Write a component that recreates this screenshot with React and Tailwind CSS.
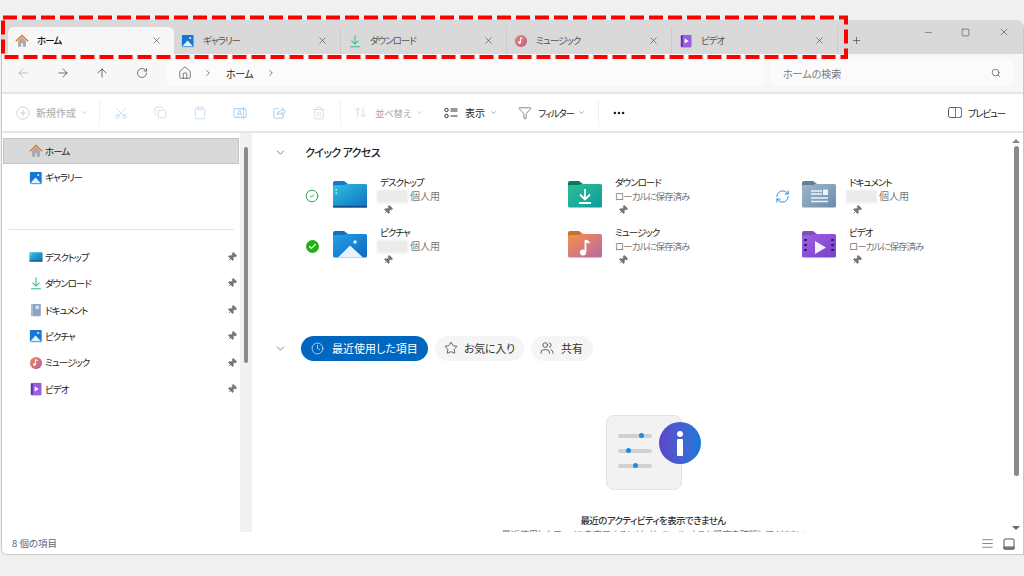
import React from "react";
import {
  ArrowLeft, ArrowRight, ArrowUp, RotateCw, Home, ChevronRight, ChevronDown, X, Plus, Minus, Square, Search,
  Scissors, Copy, Clipboard, Trash2, ArrowUpDown, Funnel, MoreHorizontal, Pin,
  Clock, Star, Users, RefreshCw, CircleCheck, Check, AlignJustify,
} from "lucide-react";

const HomeColor = ({ s = 14 }) => (
  <svg width={s} height={s} viewBox="0 0 16 16">
    <path d="M3.5 8v6.5h3.5v-4h2v4h3.5V8L8 3.5z" fill="#a9a9ad" />
    <path d="M1 8.2 8 1.6l7 6.6" fill="none" stroke="#e0782c" strokeWidth="1.7" />
  </svg>
);
const Gallery = ({ s = 14 }) => (
  <svg width={s} height={s} viewBox="0 0 16 16">
    <rect x="2" y="1" width="13" height="14" rx="1" fill="#7fb8ea" />
    <rect x="1" y="1" width="13" height="13.5" rx="1" fill="#1678d2" />
    <path d="M1.5 14 7.5 7.5 13.5 14z" fill="#e6f1fc" />
    <circle cx="10.5" cy="4.5" r="1.2" fill="#e6f1fc" />
  </svg>
);
const Download = ({ s = 14 }) => (
  <svg width={s} height={s} viewBox="0 0 16 16" fill="none" stroke="#36b898" strokeWidth="1.2">
    <path d="M8 1.5v9.5M4 7.5 8 11.5l4-4M2.5 14.5h11" />
  </svg>
);
const MusicIcon = ({ s = 14 }) => (
  <svg width={s} height={s} viewBox="0 0 16 16">
    <defs><linearGradient id="mg" x1="0" y1="0" x2="1" y2="1"><stop offset="0" stopColor="#ee8a4c" /><stop offset="1" stopColor="#b65fa8" /></linearGradient></defs>
    <circle cx="8" cy="8" r="7" fill="url(#mg)" />
    <path d="M7.5 4v5.2" stroke="#fff" strokeWidth="1.1" />
    <circle cx="6.3" cy="9.8" r="1.6" fill="#fff" />
    <path d="M7.5 4c1 .2 2 .8 2.4 1.8" stroke="#fff" strokeWidth="1.1" fill="none" />
  </svg>
);
const VideoIcon = ({ s = 14 }) => (
  <svg width={s} height={s} viewBox="0 0 16 16">
    <rect x="2" y="1" width="12" height="14" rx="1" fill="#7a3ec8" />
    <rect x="4.5" y="1" width="9.5" height="14" fill="#9a5fe0" />
    <path d="M6.5 5.2v5.6L11 8z" fill="#fff" />
    <path d="M3.2 2.5v2M3.2 6v1.5M3.2 9v1.5M3.2 12v1.5" stroke="#2a1a55" strokeWidth="1.1" />
  </svg>
);
const Desktop = ({ s = 14 }) => (
  <svg width={s} height={s} viewBox="0 0 16 16">
    <defs><linearGradient id="dg" x1="0" y1="0" x2="1" y2="1"><stop offset="0" stopColor="#39c2dc" /><stop offset="1" stopColor="#0f70b8" /></linearGradient></defs>
    <rect x="0.5" y="2.5" width="15" height="10.5" rx="1" fill="url(#dg)" />
    <rect x="0.5" y="12" width="15" height="1.2" fill="#0f4f8f" />
    <rect x="2" y="4.5" width="1" height="1" fill="#d8f4fa" />
  </svg>
);
const Doc = ({ s = 14 }) => (
  <svg width={s} height={s} viewBox="0 0 16 16">
    <rect x="2.5" y="1" width="11" height="14" rx="1" fill="#8ba4c0" />
    <rect x="7.5" y="3" width="4" height="4" fill="#d5e0ec" />
    <rect x="2.5" y="1" width="2" height="14" fill="#aebfd2" />
  </svg>
);

const FolderBase = ({ from, to, tab, children, id }) => (
  <svg width="36" height="30" viewBox="0 0 36 30">
    <defs><linearGradient id={id} x1="0" y1="0" x2="1" y2="1"><stop offset="0" stopColor={from} /><stop offset="1" stopColor={to} /></linearGradient></defs>
    <path d="M1 4a2 2 0 0 1 2-2h9l4 3h0v4H1z" fill={tab} />
    <path d="M1 7.5a1.5 1.5 0 0 1 1.5-1.5h9.5l2.5-1H33.5a1.5 1.5 0 0 1 1.5 1.5V27a1.5 1.5 0 0 1-1.5 1.5h-31A1.5 1.5 0 0 1 1 27z" fill={`url(#${id})`} />
    {children}
  </svg>
);
const fDesktop = (
  <FolderBase id="f1" from="#30c0de" to="#1070c0" tab="#1378c8">
    <rect x="1" y="26.8" width="34" height="1.7" fill="#0c4a8a" />
    <rect x="3.5" y="10" width="1.5" height="1.5" fill="#cdeef8" />
    <rect x="3.5" y="13.5" width="1.5" height="1.5" fill="#cdeef8" />
  </FolderBase>
);
const fDownload = (
  <FolderBase id="f2" from="#2fbd92" to="#0d9ca0" tab="#0b7a62">
    <path d="M18 10v10M13 15.5l5 5 5-5M12 24h12" stroke="#fff" strokeWidth="1.8" fill="none" />
  </FolderBase>
);
const fDoc = (
  <FolderBase id="f3" from="#9fb6cc" to="#6a8cae" tab="#5f7f95">
    <path d="M10 12h11M10 15h11M10 19h17M10 22.5h17" stroke="#eef3f8" strokeWidth="1.4" />
    <rect x="22" y="10.5" width="5" height="5.5" fill="#eef3f8" />
  </FolderBase>
);
const fPic = (
  <FolderBase id="f4" from="#25a0e8" to="#0f68c0" tab="#1270c4">
    <path d="M6 28.5 18 16.5 31 28.5z" fill="#e8f2fd" />
    <circle cx="23" cy="13" r="1.7" fill="#e8f2fd" />
  </FolderBase>
);
const fMusic = (
  <FolderBase id="f5" from="#f89048" to="#b868a8" tab="#c8722c">
    <path d="M18.5 11v12" stroke="#fff" strokeWidth="1.8" />
    <circle cx="16" cy="23.5" r="3" fill="#fff" />
    <path d="M18.5 10.5c2 .3 4 1.500 4.500 4l-4.500-1z" fill="#fff" />
  </FolderBase>
);
const fVideo = (
  <FolderBase id="f6" from="#a060e8" to="#7a40c8" tab="#7d50b8">
    <path d="M14 12v13l11-6.500z" fill="#f4eefc" />
    <path d="M4.500 10v2M4.500 15v2M4.500 20v2M31.500 10v2M31.500 15v2M31.500 20v2" stroke="#2c1a55" strokeWidth="2.6" />
  </FolderBase>
);

const tabs = [
  { icon: <HomeColor />, label: "ホーム", active: true, w: "w-[166px]" },
  { icon: <Gallery />, label: "ギャラリー", w: "w-[166px]" },
  { icon: <Download />, label: "ダウンロード", w: "w-[166px]" },
  { icon: <MusicIcon />, label: "ミュージック", w: "w-[165px]" },
  { icon: <VideoIcon />, label: "ビデオ", w: "w-[166px]" },
];

const PinMark = ({ className = "" }) => (
  <Pin size={10} className={`rotate-45 text-[#777] fill-[#777] ${className}`} />
);

const sideItems = [
  [<Desktop />, "デスクトップ"],
  [<Download />, "ダウンロード"],
  [<Doc />, "ドキュメント"],
  [<Gallery />, "ピクチャ"],
  [<MusicIcon />, "ミュージック"],
  [<VideoIcon />, "ビデオ"],
];

const SideRow = ({ icon, label, pin, active }) => (
  <div className={`flex items-center h-[26.4px] pl-[25px] pr-[2px] text-[9.5px] tracking-[-1px] text-[#222] ${active ? "mr-[1px] bg-[#d9d9d9] border border-[#c4c4c4]" : "border border-transparent"}`}>
    <span className="w-[16px] flex justify-start shrink-0">{icon}</span>
    <span className="flex-1">{label}</span>
    {pin && <PinMark />}
  </div>
);

const Blur = () => <span className="inline-block ml-[-3px] w-[31px] h-[13px] bg-[#ebebeb] blur-[1px] mr-[2px]" />;

const QuickItem = ({ status, folder, name, sub, cloud, w, local }) => (
  <div className={`flex ${w} h-[50px]`}>
    <span className="w-[28px] h-[30px] flex items-center justify-start shrink-0 mt-[3px]">{status}</span>
    <span className="shrink-0 mt-[1px]">{folder}</span>
    <div className="ml-[12px] flex flex-col mt-[-3px]">
      <span className="text-[9.5px] tracking-[-1px] leading-[14px] text-[#222]">{name}</span>
      <span className={`${local ? "text-[9.5px] tracking-[-1px]" : "text-[10px]"} leading-[14px] h-[14px] text-[#777] flex items-center whitespace-nowrap`}>
        {cloud && <Blur />}
        {sub}
      </span>
      <span className="h-[13px] flex items-center pl-[3px]"><PinMark /></span>
    </div>
  </div>
);

const Okay = <CircleCheck size={14} strokeWidth={1.6} className="text-[#2e9e4b] ml-[1px]" />;
const Done = (
  <span className="ml-[1.5px] w-[13px] h-[13px] rounded-full bg-[#22b014] flex items-center justify-center">
    <Check size={9} strokeWidth={3} className="text-white" />
  </span>
);
const Sync = <RefreshCw size={15} strokeWidth={1.6} className="text-[#2b8fe8] ml-[2px]" />;

const CmdText = ({ children, dim, className = "" }) => (
  <span className={`leading-[14px] whitespace-nowrap ${dim ? "text-[#a8a8a8]" : "text-[#222]"} ${className}`}>{children}</span>
);
const Sep = ({ className }) => <span className={`w-px h-[26px] bg-[#f1f1f1] ${className}`} />;
const dimIcon = "text-[#b4d2ee]";

export default function App() {
  return (
    <div className="relative w-[1024px] h-[576px] bg-[#f0f0f0] pt-[20px] overflow-hidden font-['Noto_Sans_CJK_JP','Noto_Sans',sans-serif] [font-feature-settings:'palt']">
      <div className="ml-[1px] w-[1023px] h-[535px] flex flex-col rounded-tr-[8px] rounded-bl-[6px] overflow-hidden border-l border-b border-r border-[#c8c8c8] bg-white">
        {/* Tabs */}
        <div className="h-[34px] bg-[#d9d9d9] flex items-end pl-[6px] shrink-0">
          {tabs.map((t, i) => (
            <div
              key={t.label}
              className={`${t.w} h-[27px] flex items-center pl-[7px] pr-[12px] ${t.active ? "bg-[#f7f7f7] rounded-t-[6px]" : i === 1 ? "" : "border-l border-[#cbcbcb]"}`}
            >
              <span className="w-[14px] flex justify-center shrink-0">{t.icon}</span>
              <span className={`ml-[8px] flex-1 text-[9.5px] tracking-[-1px] ${t.active ? "text-[#111] font-medium" : "text-[#555]"}`}>{t.label}</span>
              <X size={11} strokeWidth={1.2} className="text-[#333]" />
            </div>
          ))}
          <div className="h-[27px] flex items-center border-l border-[#cbcbcb] pl-[13px]">
            <Plus size={11} strokeWidth={1.3} className="text-[#333]" />
          </div>
          <div className="flex ml-auto h-full items-center pb-[10px] text-[#444]">
            <Minus size={11} strokeWidth={1.1} className="mr-[27px]" />
            <Square size={9} strokeWidth={1.5} className="mr-[28px]" />
            <X size={12} strokeWidth={1.2} className="mr-[13px]" />
          </div>
        </div>
        {/* Nav */}
        <div className="h-[38px] bg-[#f7f7f7] flex items-center shrink-0 border-b-[2px] border-[#e6e6e6] box-content">
          <div className="flex items-center w-[165px] pl-[14px] text-[#333]">
            <ArrowLeft size={14} strokeWidth={1.2} className="text-[#aaa]" />
            <ArrowRight size={14} strokeWidth={1.2} className="ml-[26px]" />
            <ArrowUp size={14} strokeWidth={1.2} className="ml-[25px]" />
            <RotateCw size={12} strokeWidth={1.3} className="ml-[27px]" />
          </div>
          <div className="w-[597px] h-[26px] bg-[#fbfbfb] rounded-[4px] flex items-center pl-[11px] text-[#333]">
            <Home size={14} strokeWidth={1.1} />
            <ChevronRight size={10} strokeWidth={1.5} className="ml-[11px]" />
            <span className="ml-[13px] text-[10px] tracking-[-0.4px] text-[#222]">ホーム</span>
            <ChevronRight size={10} strokeWidth={1.5} className="ml-[13px]" />
          </div>
          <div className="ml-[7px] w-[242px] h-[26px] bg-[#fbfbfb] rounded-[4px] flex items-center px-[12px] justify-between">
            <span className="text-[10px] text-[#777]">ホームの検索</span>
            <Search size={10} strokeWidth={1.6} className="text-[#444]" />
          </div>
        </div>
        {/* Command bar */}
        <div className="h-[37px] bg-white flex items-center shrink-0 border-b-[2px] border-[#e6e6e6] box-content">
          <svg width="14" height="14" viewBox="0 0 16 16" fill="none" stroke="#b4d2ee" strokeWidth="1.1" className="ml-[14px]">
            <circle cx="8" cy="8" r="7" stroke="#cfcfcf" /><path d="M8 4.500v7M4.500 8h7" />
          </svg>
          <CmdText dim className="ml-[6px] text-[10px]">新規作成</CmdText>
          <ChevronDown size={7} className="ml-[5px] text-[#aaa]" />
          <Sep className="ml-[11px]" />
          <Scissors size={14} strokeWidth={1.2} className={`ml-[14px] rotate-[-90deg] ${dimIcon}`} />
          <Copy size={13} strokeWidth={1.2} className={`ml-[26px] ${dimIcon}`} />
          <Clipboard size={14} strokeWidth={1.2} className={`ml-[26px] ${dimIcon}`} />
          <svg width="14" height="14" viewBox="0 0 16 16" fill="none" stroke="#b4d2ee" strokeWidth="1.2" className="ml-[26px]">
            <rect x="1" y="3" width="14" height="10" rx="2" /><path d="M5 11l2-6h1l2 6M6 9h3M12 1v14" />
          </svg>
          <svg width="13" height="13" viewBox="0 0 16 16" fill="none" stroke="#b4d2ee" strokeWidth="1.3" className="ml-[26px]">
            <path d="M7 3H3a2 2 0 0 0-2 2v8a2 2 0 0 0 2 2h8a2 2 0 0 0 2-2v-2" />
            <path d="M5 11c.5-3.500 3-5.500 6.500-5.500V3l3.500 4-3.500 4V8.500C9 8.500 6.500 9 5 11z" />
          </svg>
          <Trash2 size={14} strokeWidth={1.2} className="ml-[26px] text-[#cfcfcf]" />
          <Sep className="ml-[14px]" />
          <ArrowUpDown size={13} strokeWidth={1.2} className={`ml-[13px] ${dimIcon}`} />
          <CmdText dim className="ml-[8px] text-[9.5px] tracking-[-0.3px]">並べ替え</CmdText>
          <ChevronDown size={7} className="ml-[5px] text-[#aaa]" />
          <svg width="14" height="12" viewBox="0 0 14 12" fill="none" stroke="#333" strokeWidth="1" className="ml-[21px]">
            <circle cx="2.500" cy="3" r="1.700" /><circle cx="2.500" cy="9" r="1.700" /><path d="M6.500 2h7M6.500 4h7M6.500 9h7" />
          </svg>
          <CmdText className="ml-[7px] text-[10px]">表示</CmdText>
          <ChevronDown size={7} className="ml-[5px] text-[#666]" />
          <Funnel size={14} strokeWidth={1} className="ml-[21px] text-[#333]" />
          <CmdText className="ml-[6px] text-[9.5px] tracking-[-1.2px]">フィルター</CmdText>
          <ChevronDown size={7} className="ml-[4px] text-[#666]" />
          <Sep className="ml-[13px]" />
          <MoreHorizontal size={14} strokeWidth={2.4} className="ml-[13px] text-[#222]" />
          <span className="ml-auto flex items-center mr-[18px]">
            <svg width="14" height="11" viewBox="0 0 14 11" fill="none" strokeWidth="1">
              <rect x="0.500" y="0.500" width="13" height="10" rx="2" stroke="#555" />
              <path d="M7.500 0.500h4a2 2 0 0 1 2 2v6a2 2 0 0 1-2 2h-4z" stroke="#2b8fe8" />
            </svg>
            <CmdText className="ml-[6px] text-[9.5px] tracking-[-1.2px]">プレビュー</CmdText>
          </span>
        </div>
        {/* Body */}
        <div className="flex-1 flex min-h-0">
          <div className="w-[238px] shrink-0 pt-[5px] pl-[1px]">
            <SideRow icon={<HomeColor />} label="ホーム" active />
            <SideRow icon={<Gallery />} label="ギャラリー" />
            <div className="mt-[38px] mb-[14px] h-px bg-[#e3e3e3] ml-[6px] mr-[6px]" />
            {sideItems.map(([ic, l]) => <SideRow key={l} icon={ic} label={l} pin />)}
          </div>
          <div className="w-[12px] shrink-0 bg-[#f1f1f1] flex justify-center pt-[14px]">
            <div className="w-[4px] h-[216px] bg-[#8a8a8a] rounded-full" />
          </div>
          <div className="flex-1 flex min-w-0 overflow-hidden">
            <div className="flex-1 min-w-0 overflow-hidden relative">
              <div className="flex items-center h-[20px] mt-[9px] pl-[22px]">
                <ChevronDown size={13} strokeWidth={1.2} className="text-[#444]" />
                <span className="ml-[18px] text-[11px] tracking-[-0.6px] font-medium text-[#222]">クイック アクセス</span>
              </div>
              <div className="mt-[16px] pl-[52px] flex flex-col">
                <div className="flex">
                  <QuickItem w="w-[235px]" status={Okay} folder={fDesktop} name="デスクトップ" sub="個人用" cloud />
                  <QuickItem w="w-[234px]" status={<span />} folder={fDownload} name="ダウンロード" sub="ローカルに保存済み" local />
                  <QuickItem status={Sync} folder={fDoc} name="ドキュメント" sub="個人用" cloud />
                </div>
                <div className="flex">
                  <QuickItem w="w-[235px]" status={Done} folder={fPic} name="ピクチャ" sub="個人用" cloud />
                  <QuickItem w="w-[234px]" status={<span />} folder={fMusic} name="ミュージック" sub="ローカルに保存済み" local />
                  <QuickItem status={<span />} folder={fVideo} name="ビデオ" sub="ローカルに保存済み" local />
                </div>
              </div>
              <div className="flex items-center mt-[57px] pl-[22px] h-[26px]">
                <ChevronDown size={13} strokeWidth={1.2} className="text-[#444]" />
                <div className="ml-[14px] w-[127px] h-[25px] rounded-full bg-[#0067c0] flex items-center pl-[10px] text-white text-[11px]">
                  <Clock size={13} strokeWidth={1.2} />
                  <span className="ml-[8px]">最近使用した項目</span>
                </div>
                <div className="ml-[7px] w-[89px] h-[25px] rounded-full bg-[#f5f5f5] flex items-center pl-[9px] text-[#333] text-[11px]">
                  <Star size={14} strokeWidth={1.3} />
                  <span className="ml-[6px] tracking-[-0.3px]">お気に入り</span>
                </div>
                <div className="ml-[7px] w-[62px] h-[25px] rounded-full bg-[#f5f5f5] flex items-center pl-[9px] text-[#333] text-[11px]">
                  <Users size={14} strokeWidth={1.3} />
                  <span className="ml-[7px]">共有</span>
                </div>
              </div>
              <div className="mt-[54px] flex flex-col items-center w-[802px]">
                <div className="relative mr-[19px] w-[76px] h-[75px] rounded-[8px] bg-[#f2f2f2] border border-[#e2e2e2] flex flex-col gap-[11px] pl-[11px] pt-[18px]">
                  <div className="relative w-[34px] h-[4px] rounded-full bg-[#d0d0d0]"><span className="absolute left-[21px] top-[-1px] w-[5px] h-[5px] rounded-full bg-[#2088e8]" /></div>
                  <div className="relative w-[34px] h-[4px] rounded-full bg-[#d0d0d0]"><span className="absolute left-[8px] top-[-1px] w-[5px] h-[5px] rounded-full bg-[#2088e8]" /></div>
                  <div className="relative w-[34px] h-[4px] rounded-full bg-[#d0d0d0]"><span className="absolute left-[15px] top-[-1px] w-[5px] h-[5px] rounded-full bg-[#2088e8]" /></div>
                  <div className="absolute left-[52px] top-[6px] w-[42px] h-[42px] rounded-full bg-gradient-to-r from-[#5b45c8] to-[#0878d8] flex flex-col items-center justify-center gap-[2px]">
                    <span className="w-[6px] h-[6px] rounded-full bg-white" />
                    <span className="w-[6px] h-[17px] rounded-[1px] bg-white" />
                  </div>
                </div>
                <div className="mt-[23px] text-[9.5px] tracking-[-0.6px] font-medium leading-[14px] text-[#333]">最近のアクティビティを表示できません</div>
                <div className="text-[9.5px] tracking-[-0.5px] leading-[14px] text-[#777] whitespace-nowrap">最近使用したファイルを表示するには、サインインするか設定を確認してください</div>
              </div>
            </div>
            <div className="w-[14px] shrink-0 bg-white flex flex-col items-center pt-[6px] pb-[2px]">
              <span className="w-0 h-0 border-x-[4px] border-x-transparent border-b-[4px] border-b-[#888]" />
              <div className="w-[5px] h-[330px] bg-[#8a8a8a] rounded-full mt-[3px]" />
              <span className="mt-auto w-0 h-0 border-x-[4px] border-x-transparent border-t-[4px] border-t-[#666]" />
            </div>
          </div>
        </div>
        {/* Status */}
        <div className="h-[22px] pt-[1px] shrink-0 bg-white flex items-center pl-[10px] pr-[8px]">
          <span className="text-[9.5px] text-[#55657a]">8 個の項目</span>
          <AlignJustify size={13} strokeWidth={1.4} className="ml-auto text-[#666]" />
          <svg width="12" height="12" viewBox="0 0 12 12" fill="none" stroke="#555" className="ml-[9px]">
            <rect x="1" y="1" width="10" height="10" rx="1" /><path d="M1 9h10v2H1z" fill="#999" />
          </svg>
        </div>
      </div>
      {/* Annotation */}
      <svg width="1024" height="576" className="absolute left-0 top-0 pointer-events-none">
        <rect x="3" y="17.500" width="843" height="39.500" fill="none" stroke="#ff0000" strokeWidth="4" strokeDasharray="14 5" />
      </svg>
    </div>
  );
}
